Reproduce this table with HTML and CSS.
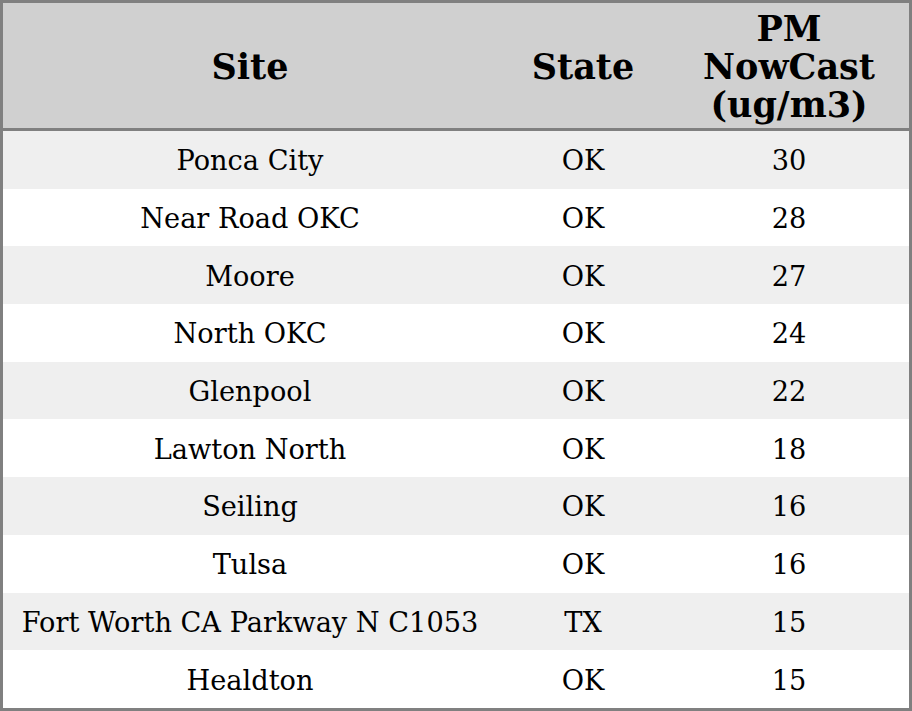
FILE: index.html
```html
<!DOCTYPE html>
<html>
<head>
<meta charset="utf-8">
<link rel="stylesheet" href="styles.css">
</head>
<body>
<table class="aq">
  <colgroup>
    <col class="c-site">
    <col class="c-state">
    <col class="c-pm">
  </colgroup>
  <thead>
    <tr><th>Site</th><th>State</th><th>PM NowCast (ug/m3)</th></tr>
  </thead>
  <tbody>
    <tr><td>Ponca City</td><td>OK</td><td>30</td></tr>
    <tr><td>Near Road OKC</td><td>OK</td><td>28</td></tr>
    <tr><td>Moore</td><td>OK</td><td>27</td></tr>
    <tr><td>North OKC</td><td>OK</td><td>24</td></tr>
    <tr><td>Glenpool</td><td>OK</td><td>22</td></tr>
    <tr><td>Lawton North</td><td>OK</td><td>18</td></tr>
    <tr><td>Seiling</td><td>OK</td><td>16</td></tr>
    <tr><td>Tulsa</td><td>OK</td><td>16</td></tr>
    <tr><td>Fort Worth CA Parkway N C1053</td><td>TX</td><td>15</td></tr>
    <tr><td>Healdton</td><td>OK</td><td>15</td></tr>
  </tbody>
</table>
</body>
</html>
```

FILE: styles.css
```css
html, body {
  margin: 0;
  padding: 0;
  background: #ffffff;
}
.aq {
  width: 912px;
  border-collapse: separate;
  border-spacing: 0;
  border: 3px solid #808080;
  table-layout: fixed;
  font-family: "DejaVu Serif", serif;
  color: #000;
}
.c-site { width: 494px; }
.c-state { width: 172px; }
.c-pm { width: 240px; }
.aq th {
  background: #d0d0d0;
  font-weight: bold;
  font-size: 35px;
  line-height: 38px;
  height: 128px;
  padding: 2px 8px 0;
  box-sizing: border-box;
  text-align: center;
  vertical-align: middle;
  border-bottom: 3px solid #808080;
}
.aq td {
  font-size: 27.2px;
  line-height: 30px;
  height: 57.7px;
  padding: 3px 2px 0;
  box-sizing: border-box;
  text-align: center;
  vertical-align: middle;
}
.aq tbody tr:nth-child(odd) td { background: #efefef; }
.aq tbody tr:nth-child(even) td { background: #ffffff; }
```
